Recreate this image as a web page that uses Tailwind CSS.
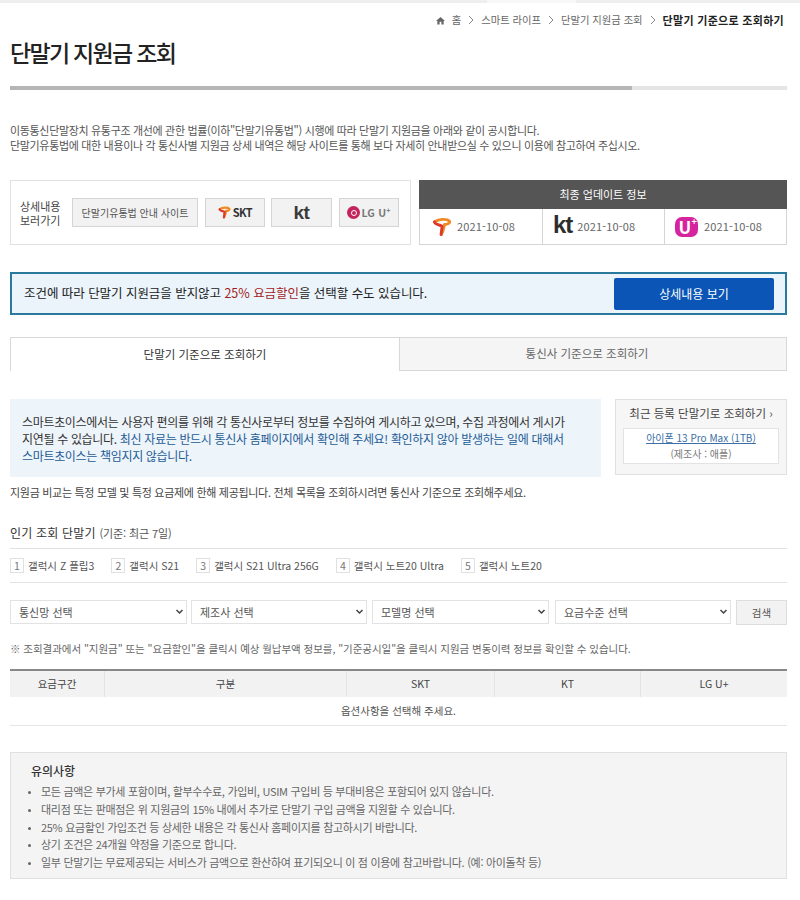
<!DOCTYPE html>
<html lang="ko">
<head>
    <meta charset="UTF-8">
    <meta name="viewport" content="width=device-width, initial-scale=1.0">
    <script src="https://cdn.jsdelivr.net/npm/@tailwindcss/browser@4"></script>
    <title>단말기 지원금 조회</title>
</head>
<body class="bg-white font-['Noto_Sans_CJK_KR','Noto_Sans',sans-serif] text-[#444]">
    <div class="h-[3px] bg-[#eeeeee]"><div class="ml-[487px] w-[89px] h-full bg-[#f8f8f8]"></div></div>
    <div class="w-[777px] ml-[10px]">
        <!-- Breadcrumb -->
        <div class="h-[34px] flex items-center justify-end gap-[7px] text-[10.3px] text-[#666] pr-[3px]">
            <svg class="w-[9px] h-[9px]" viewBox="0 0 10 10" fill="#666"><path d="M5 1 L10 5.5 H8.5 V9.5 H6 V6.500 H4 V9.5 H1.5 V5.5 H0 Z"/></svg>
            <span>홈</span>
            <svg class="w-[6px] h-[10px]" viewBox="0 0 6 10" fill="none" stroke="#888"><path d="M1 1l4 4-4 4"/></svg>
            <span>스마트 라이프</span>
            <svg class="w-[6px] h-[10px]" viewBox="0 0 6 10" fill="none" stroke="#888"><path d="M1 1l4 4-4 4"/></svg>
            <span>단말기 지원금 조회</span>
            <svg class="w-[6px] h-[10px]" viewBox="0 0 6 10" fill="none" stroke="#888"><path d="M1 1l4 4-4 4"/></svg>
            <span class="font-bold text-[11px] tracking-[0.3px] text-[#222]">단말기 기준으로 조회하기</span>
        </div>

        <h1 class="-mt-[1px] h-[32px] leading-[32px] text-[23px] font-medium text-[#222] tracking-[-1.7px]">단말기 지원금 조회</h1>

        <div class="mt-[18px] h-[4px] bg-[#e5e5e5]"><div class="h-full w-[622px] bg-[#b5b5b5]"></div></div>

        <p class="mt-[33px] text-[11px] leading-[15px] text-[#555] tracking-[-0.33px]">이동통신단말장치 유통구조 개선에 관한 법률(이하"단말기유통법") 시행에 따라 단말기 지원금을 아래와 같이 공시합니다.<br>단말기유통법에 대한 내용이나 각 통신사별 지원금 상세 내역은 해당 사이트를 통해 보다 자세히 안내받으실 수 있으니 이용에 참고하여 주십시오.</p>

        <!-- Links and update info -->
        <div class="mt-[27px] flex gap-[8px]">
            <div class="w-[401px] h-[65px] border border-[#e2e2e2] flex items-center pl-[9px]">
                <div class="w-[44px] text-[11px] leading-[14px] text-[#444] mr-[8px]">상세내용 보러가기</div>
                <div class="w-[126px] h-[29px] mr-[7px] border border-[#d5d5d5] bg-[#f2f2f2] flex items-center justify-center text-[10px] text-[#555]">단말기유통법 안내 사이트</div>
                <div class="w-[60px] h-[29px] mr-[6px] border border-[#d5d5d5] bg-[#f2f2f2] flex items-center justify-center gap-[2px] text-[11px] font-bold tracking-[-0.5px] text-[#333]">
                    <svg class="w-[13px] h-[15px]" viewBox="0 0 24 24" fill="none" stroke-width="4" stroke-linecap="round"><path d="M3 6C8 2 18 2 21 5C22 8 17 9 15 9C14 13 14 17 11 21" stroke="#f08a24"/><path d="M3 6C4 10 10 9 12 11C12 15 11 18 11 21" stroke="#e0382a"/></svg>
                    <span>SKT</span>
                </div>
                <div class="w-[61px] h-[29px] mr-[7px] border border-[#d5d5d5] bg-[#f2f2f2] flex items-center justify-center font-['Liberation_Sans',sans-serif] text-[19px] leading-none font-bold tracking-[-0.5px] text-[#3a3a3a]">kt</div>
                <div class="w-[60px] h-[29px] border border-[#d5d5d5] bg-[#f2f2f2] flex items-center justify-center gap-[1px] text-[10.5px] font-bold tracking-[0.2px] text-[#777]">
                    <span class="w-[13px] h-[13px] rounded-full bg-[#c4235c] flex items-center justify-center"><span class="w-[6px] h-[6px] rounded-full border border-white"></span></span>
                    <span>LG U<sup class="text-[7px]">+</sup></span>
                </div>
            </div>
            <div class="w-[368px]">
                <div class="h-[29px] bg-[#555555] text-white text-[11px] flex items-center justify-center">최종 업데이트 정보</div>
                <div class="h-[36px] border-x border-b border-[#d5d5d5] grid grid-cols-[123px_122px_1fr] text-[11px] tracking-[0.15px] text-[#666]">
                    <div class="flex items-center pl-[12px] gap-[5px] border-r border-[#d5d5d5]">
                        <svg class="w-[20px] h-[20px]" viewBox="0 0 24 24" fill="none" stroke-width="3.500" stroke-linecap="round" stroke-linejoin="round"><path d="M3 6C8 2 18 2 21 5C22 8 17 9 15 9C14 13 14 17 11 21" stroke="#f08a24"/><path d="M3 6C4 10 10 9 12 11C12 15 11 18 11 21" stroke="#e0382a"/></svg>
                        <span>2021-10-08</span>
                    </div>
                    <div class="flex items-center pl-[10px] gap-[5px] border-r border-[#d5d5d5]">
                        <span class="font-['Liberation_Sans',sans-serif] text-[24px] leading-none font-bold text-[#2d2d2d] tracking-[-1px] mb-[3px]">kt</span>
                        <span>2021-10-08</span>
                    </div>
                    <div class="flex items-center pl-[10px] gap-[6px]">
                        <span class="relative w-[23px] h-[20px] rounded-[7px] bg-[#d6249f] text-white text-[17px] font-bold leading-none flex items-center justify-center pr-[3px]">U<span class="absolute top-0 right-[1px] text-[9px] font-bold leading-none">+</span></span>
                        <span>2021-10-08</span>
                    </div>
                </div>
            </div>
        </div>

        <!-- Rate discount banner -->
        <div class="mt-[27px] h-[43px] border-2 border-[#2a7a9e] bg-[#ebf4fb] flex items-center justify-between pl-[12px] pr-[11px]">
            <p class="text-[12.5px] tracking-[-0.05px] text-[#222]">조건에 따라 단말기 지원금을 받지않고 <span class="text-[#a51c1c]">25% 요금할인</span>을 선택할 수도 있습니다.</p>
            <div class="w-[160px] h-[32px] rounded-[2px] bg-[#0a55b5] text-white text-[12px] flex items-center justify-center">상세내용 보기</div>
        </div>

        <!-- Tabs -->
        <div class="mt-[22px] h-[34px] flex text-[11.5px]">
            <div class="w-[390px] border-t border-l border-r border-[#d8d8d8] bg-white text-[#333] flex items-center justify-center">단말기 기준으로 조회하기</div>
            <div class="flex-1 border-t border-r border-b border-[#d8d8d8] bg-[#f5f5f5] text-[#666] flex items-center justify-center pr-[12px]">통신사 기준으로 조회하기</div>
        </div>

        <!-- Notice and recent device -->
        <div class="mt-[28px] flex gap-[14px] items-start">
            <div class="w-[591px] h-[78px] bg-[#edf4fa] px-[12px] flex items-center text-[12px] leading-[17px] text-[#333] tracking-[-0.33px]">
                <p class="break-keep">스마트초이스에서는 사용자 편의를 위해 각 통신사로부터 정보를 수집하여 게시하고 있으며, 수집 과정에서 게시가<br>지연될 수 있습니다. <span class="text-[#1d5c96]">최신 자료는 반드시 통신사 홈페이지에서 확인해 주세요! 확인하지 않아 발생하는 일에 대해서<br>스마트초이스는 책임지지 않습니다.</span></p>
            </div>
            <div class="w-[172px] h-[76px] border border-[#e0e0e0] bg-[#f6f6f6] px-[7px] pt-[4px]">
                <div class="text-[11.5px] leading-[18px] text-[#444] text-center">최근 등록 단말기로 조회하기 ›</div>
                <div class="mt-[6px] h-[36px] border border-[#e3e3e3] bg-white text-center text-[10px] leading-[16px] pt-[1px]">
                    <div class="text-[#3a6ea5] underline">아이폰 13 Pro Max (1TB)</div>
                    <div class="text-[#777]">(제조사 : 애플)</div>
                </div>
            </div>
        </div>

        <p class="mt-[7px] text-[11px] leading-[16px] text-[#444] tracking-[-0.3px]">지원금 비교는 특정 모델 및 특정 요금제에 한해 제공됩니다. 전체 목록을 조회하시려면 통신사 기준으로 조회해주세요.</p>

        <!-- Popular devices -->
        <div class="mt-[25px] h-[24px] border-b border-[#e2e2e2] text-[12px] leading-[16px] tracking-[0.2px] text-[#333]">인기 조회 단말기 <span class="text-[11px] tracking-[-0.1px] text-[#555]">(기준: 최근 7일)</span></div>
        <div class="h-[34px] border-b border-[#e2e2e2] flex items-center gap-[17px] text-[10.5px] text-[#555]">
            <div class="flex items-center gap-[4px]"><span class="w-[14px] h-[15px] border border-[#e0e0e0] text-center leading-[13px] text-[#777]">1</span>갤럭시 Z 플립3</div>
            <div class="flex items-center gap-[4px]"><span class="w-[14px] h-[15px] border border-[#e0e0e0] text-center leading-[13px] text-[#777]">2</span>갤럭시 S21</div>
            <div class="flex items-center gap-[4px]"><span class="w-[14px] h-[15px] border border-[#e0e0e0] text-center leading-[13px] text-[#777]">3</span>갤럭시 S21 Ultra 256G</div>
            <div class="flex items-center gap-[4px]"><span class="w-[14px] h-[15px] border border-[#e0e0e0] text-center leading-[13px] text-[#777]">4</span>갤럭시 노트20 Ultra</div>
            <div class="flex items-center gap-[4px]"><span class="w-[14px] h-[15px] border border-[#e0e0e0] text-center leading-[13px] text-[#777]">5</span>갤럭시 노트20</div>
        </div>

        <!-- Search -->
        <div class="mt-[17px] h-[24px] flex text-[11px] text-[#555]">
            <div class="w-[177px] mr-[4px] border border-[#e2e2e2] flex items-center justify-between pl-[8px] pr-[2px]"><span>통신망 선택</span><svg class="w-[9px] h-[6px]" viewBox="0 0 8 6" fill="none" stroke="#444" stroke-width="1.5"><path d="M1 1l3 3 3-3"/></svg></div>
            <div class="w-[176px] mr-[5px] border border-[#e2e2e2] flex items-center justify-between pl-[8px] pr-[2px]"><span>제조사 선택</span><svg class="w-[9px] h-[6px]" viewBox="0 0 8 6" fill="none" stroke="#444" stroke-width="1.5"><path d="M1 1l3 3 3-3"/></svg></div>
            <div class="w-[177px] mr-[6px] border border-[#e2e2e2] flex items-center justify-between pl-[8px] pr-[2px]"><span>모델명 선택</span><svg class="w-[9px] h-[6px]" viewBox="0 0 8 6" fill="none" stroke="#444" stroke-width="1.5"><path d="M1 1l3 3 3-3"/></svg></div>
            <div class="w-[176px] mr-[5px] border border-[#e2e2e2] flex items-center justify-between pl-[8px] pr-[2px]"><span>요금수준 선택</span><svg class="w-[9px] h-[6px]" viewBox="0 0 8 6" fill="none" stroke="#444" stroke-width="1.5"><path d="M1 1l3 3 3-3"/></svg></div>
            <div class="flex-1 h-[25px] border border-[#dddddd] bg-[#f2f2f2] flex items-center justify-center text-[10.5px] text-[#555]">검색</div>
        </div>

        <p class="mt-[17px] text-[10.5px] leading-[16px] text-[#666] tracking-[-0.05px]">※ 조회결과에서 "지원금" 또는 "요금할인"을 클릭시 예상 월납부액 정보를, "기준공시일"을 클릭시 지원금 변동이력 정보를 확인할 수 있습니다.</p>

        <!-- Result table -->
        <div class="mt-[12px] border-t-2 border-[#888] border-b border-b-[#e5e5e5] text-[10.5px] text-[#444]">
            <div class="h-[26px] bg-[#f2f2f2] grid grid-cols-[95px_242px_148px_146px_1fr] items-center text-center">
                <div class="h-full flex items-center justify-center border-r border-[#e4e4e4]">요금구간</div>
                <div class="h-full flex items-center justify-center border-r border-[#e4e4e4]">구분</div>
                <div class="h-full flex items-center justify-center border-r border-[#e4e4e4]">SKT</div>
                <div class="h-full flex items-center justify-center border-r border-[#e4e4e4]">KT</div>
                <div class="h-full flex items-center justify-center">LG U+</div>
            </div>
            <div class="h-[28px] flex items-center justify-center text-[#555]">옵션사항을 선택해 주세요.</div>
        </div>

        <!-- Notes -->
        <div class="mt-[26px] h-[127px] border border-[#e0e0e0] bg-[#f4f4f4] pl-[20px] pt-[9px] text-[11px] leading-[17.8px] text-[#666]">
            <h2 class="text-[12px] leading-[18px] font-medium text-[#333] mb-[3px]">유의사항</h2>
            <ul class="list-disc pl-[10px] marker:text-[8px] tracking-[-0.3px]">
                <li>모든 금액은 부가세 포함이며, 할부수수료, 가입비, USIM 구입비 등 부대비용은 포함되어 있지 않습니다.</li>
                <li>대리점 또는 판매점은 위 지원금의 15% 내에서 추가로 단말기 구입 금액을 지원할 수 있습니다.</li>
                <li>25% 요금할인 가입조건 등 상세한 내용은 각 통신사 홈페이지를 참고하시기 바랍니다.</li>
                <li>상기 조건은 24개월 약정을 기준으로 합니다.</li>
                <li>일부 단말기는 무료제공되는 서비스가 금액으로 환산하여 표기되오니 이 점 이용에 참고바랍니다. (예: 아이돌착 등)</li>
            </ul>
        </div>
    </div>
</body>
</html>
